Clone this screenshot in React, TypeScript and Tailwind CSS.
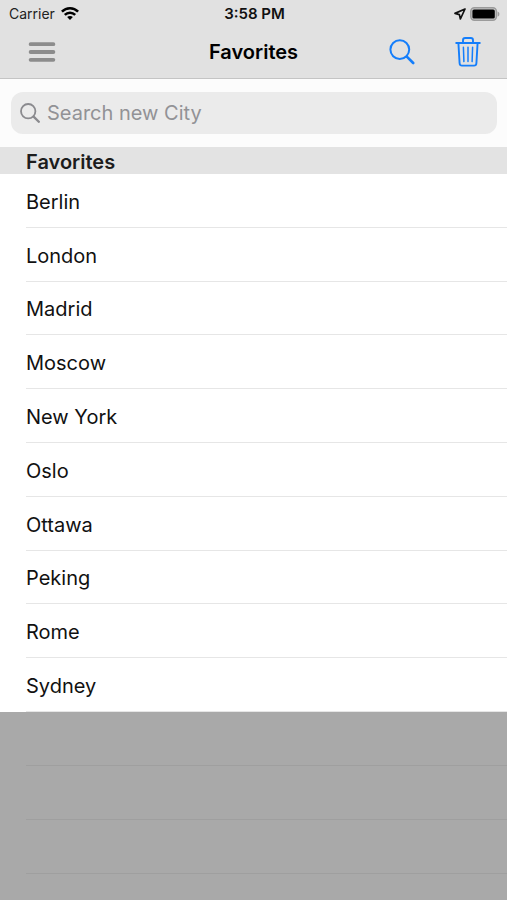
import { useState } from 'react'

const cities = ['Berlin', 'London', 'Madrid', 'Moscow', 'New York', 'Oslo', 'Ottawa', 'Peking', 'Rome', 'Sydney']

function WifiIcon() {
  return (
    <svg width="18" height="13" viewBox="0 0 18 13" fill="none" stroke="#000" strokeWidth="2.5">
      <path d="M0.9 4.7C5.4 0.1 12.6 0.1 17.1 4.7" />
      <path d="M3.8 7.9C6.7 5 11.3 5 14.2 7.9" />
      <path d="M9 13L6.1 10C7.7 8.6 10.3 8.6 11.9 10Z" fill="#000" stroke="none" />
    </svg>
  )
}

function LocationIcon() {
  return (
    <svg width="12" height="12" viewBox="0 0 12 12" fill="none" stroke="#111" strokeWidth="1.7" strokeLinejoin="round">
      <path d="M11 1L1 5.4L5.4 6.6L6.4 11Z" />
    </svg>
  )
}

function BatteryIcon() {
  return (
    <svg width="30" height="14" viewBox="0 0 30 14" fill="none">
      <rect x="0.8" y="0.8" width="25.6" height="12.4" rx="3.6" fill="#c9c9c9" stroke="#9b9b9b" strokeWidth="1.5" />
      <rect x="2.4" y="2.4" width="22.4" height="9.2" rx="1.6" fill="#000" />
      <path d="M27.6 4.4C30 5.3 30 8.7 27.6 9.6Z" fill="#9b9b9b" />
    </svg>
  )
}

function MenuIcon() {
  return (
    <svg width="28" height="22" viewBox="0 0 28 22" stroke="#8c8c8c" strokeWidth="3.8" strokeLinecap="round">
      <path d="M2.6 3.2H25.4M2.6 11H25.4M2.6 18.8H25.4" />
    </svg>
  )
}

function SearchIcon() {
  return (
    <svg width="26" height="26" viewBox="0 0 26 26" fill="none" stroke="#147efb" strokeLinecap="round">
      <circle cx="10.8" cy="10.6" r="9.4" strokeWidth="2" />
      <path d="M17.8 17.6L24.2 24" strokeWidth="2.6" />
    </svg>
  )
}

function TrashIcon() {
  return (
    <svg width="26" height="32" viewBox="0 0 26 32" fill="none" stroke="#147efb" strokeWidth="1.9" strokeLinecap="round" strokeLinejoin="round">
      <path d="M1.2 7H24.8" />
      <path d="M8 7V4.2C8 2.8 9 2 10.2 2H15.8C17 2 18 2.8 18 4.2V7" />
      <path d="M3.4 7L4.6 27.2C4.7 28.6 5.6 29.6 7 29.6H19C20.4 29.6 21.3 28.6 21.4 27.2L22.6 7" />
      <path d="M8.4 11.2L8.9 25.6M13 11.2V25.6M17.6 11.2L17.1 25.6" strokeWidth="1.5" />
    </svg>
  )
}

export default function App() {
  const [query, setQuery] = useState('')

  return (
    <div className="flex min-h-screen flex-col bg-[#a9a9a9] font-['Inter',sans-serif] text-black">
      <header className="border-b border-[#c4c4c4] bg-[#e1e1e1] pb-[2px]">
        <div className="grid h-[27px] grid-cols-[1fr_auto_1fr] items-center pl-[9px] pr-[7px] text-sm">
          <div className="flex items-center gap-[6px] text-[#222]">
            <span>Carrier</span>
            <WifiIcon />
          </div>
          <span className="text-[15px] font-semibold text-[#111]">3:58 PM</span>
          <div className="flex items-center justify-end gap-1">
            <LocationIcon />
            <BatteryIcon />
          </div>
        </div>
        <div className="grid h-[49px] grid-cols-[1fr_auto_1fr] items-center px-[26px]">
          <button type="button" aria-label="Menu" className="w-fit pl-[2px]">
            <MenuIcon />
          </button>
          <h1 className="text-[20px] font-semibold">Favorites</h1>
          <div className="flex items-center justify-end gap-10">
            <button type="button" aria-label="Search">
              <SearchIcon />
            </button>
            <button type="button" aria-label="Delete">
              <TrashIcon />
            </button>
          </div>
        </div>
      </header>

      <div className="bg-[#fcfcfc] pt-[13px] pr-[10px] pb-[13px] pl-[11px]">
        <label className="flex h-[42px] items-center gap-[7px] rounded-[12px] bg-[#ebebeb] px-[9px]">
          <svg width="20" height="20" viewBox="0 0 20 20" fill="none" stroke="#8a8a8e" strokeLinecap="round">
            <circle cx="8.2" cy="8.2" r="7.2" strokeWidth="1.8" />
            <path d="M13.6 13.6L18.8 18.8" strokeWidth="2.3" />
          </svg>
          <input
            type="search"
            aria-label="Search new City"
            placeholder="Search new City"
            value={query}
            onChange={(e) => setQuery(e.target.value)}
            className="min-w-0 flex-1 bg-transparent text-[20px] outline-none placeholder:text-[#929296]"
          />
        </label>
      </div>

      <h2 className="bg-[#e3e3e3] px-[26px] pt-[3px] text-[20px] leading-[24px] font-semibold text-[#1c1c1c]">Favorites</h2>
      <ul className="grid min-h-[538px] auto-rows-fr bg-white">
        {cities.map((city) => (
          <li key={city} className="flex pl-[26px]">
            <span className="flex flex-1 items-center border-b border-[#e6e6e6] pt-[3px] text-[20px] text-[#111]">{city}</span>
          </li>
        ))}
      </ul>
      <div className="flex flex-col pl-[26px]" aria-hidden="true">
        <div className="h-[54px] border-b border-[#9f9f9f]" />
        <div className="h-[54px] border-b border-[#9f9f9f]" />
        <div className="h-[54px] border-b border-[#9f9f9f]" />
      </div>
    </div>
  )
}
